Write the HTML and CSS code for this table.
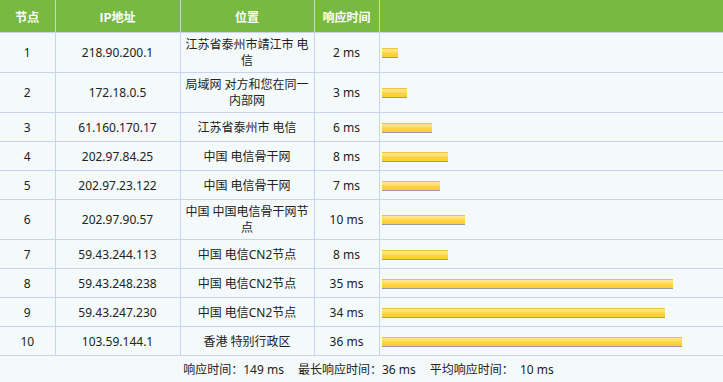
FILE: index.html
```html
<!DOCTYPE html>
<html lang="zh">
<head>
<meta charset="utf-8">
<link rel="stylesheet" href="styles.css">
</head>
<body>
<table class="trace">
  <colgroup>
    <col class="c-node"><col class="c-ip"><col class="c-loc"><col class="c-time"><col class="c-bar">
  </colgroup>
  <thead>
    <tr><th>节点</th><th>IP地址</th><th>位置</th><th>响应时间</th><th></th></tr>
  </thead>
  <tbody>
    <tr><td>1</td><td>218.90.200.1</td><td class="loc">江苏省泰州市靖江市 电信</td><td>2 ms</td><td class="bar-cell"><div class="bar" style="width:16px"></div></td></tr>
    <tr><td>2</td><td>172.18.0.5</td><td class="loc">局域网 对方和您在同一内部网</td><td>3 ms</td><td class="bar-cell"><div class="bar" style="width:25px"></div></td></tr>
    <tr><td>3</td><td>61.160.170.17</td><td class="loc">江苏省泰州市 电信</td><td>6 ms</td><td class="bar-cell"><div class="bar" style="width:50px"></div></td></tr>
    <tr><td>4</td><td>202.97.84.25</td><td class="loc">中国 电信骨干网</td><td>8 ms</td><td class="bar-cell"><div class="bar" style="width:66px"></div></td></tr>
    <tr><td>5</td><td>202.97.23.122</td><td class="loc">中国 电信骨干网</td><td>7 ms</td><td class="bar-cell"><div class="bar" style="width:58px"></div></td></tr>
    <tr><td>6</td><td>202.97.90.57</td><td class="loc">中国 中国电信骨干网节点</td><td>10 ms</td><td class="bar-cell"><div class="bar" style="width:83px"></div></td></tr>
    <tr><td>7</td><td>59.43.244.113</td><td class="loc">中国 电信CN2节点</td><td>8 ms</td><td class="bar-cell"><div class="bar" style="width:66px"></div></td></tr>
    <tr><td>8</td><td>59.43.248.238</td><td class="loc">中国 电信CN2节点</td><td>35 ms</td><td class="bar-cell"><div class="bar" style="width:291px"></div></td></tr>
    <tr><td>9</td><td>59.43.247.230</td><td class="loc">中国 电信CN2节点</td><td>34 ms</td><td class="bar-cell"><div class="bar" style="width:283px"></div></td></tr>
    <tr><td>10</td><td>103.59.144.1</td><td class="loc">香港 特别行政区</td><td>36 ms</td><td class="bar-cell"><div class="bar" style="width:300px"></div></td></tr>
  </tbody>
  <tfoot>
    <tr><td colspan="5"><span class="stat">响应时间：149 ms</span><span class="stat">最长响应时间：36 ms</span><span class="stat">平均响应时间：&nbsp; 10 ms</span></td></tr>
  </tfoot>
</table>
</body>
</html>
```
FILE: styles.css
```css
html, body {
  margin: 0;
  padding: 0;
  background: #f4fafa;
}
body {
  font-family: "Noto Sans", "Noto Sans CJK SC", sans-serif;
  font-size: 12px;
  color: #222;
}
.trace {
  width: 723px;
  border-collapse: collapse;
  table-layout: fixed;
}
.c-node { width: 55px; }
.c-ip { width: 125px; }
.c-loc { width: 134px; }
.c-time { width: 65px; }
.trace th {
  background: #77b941;
  color: #fff;
  font-weight: bold;
  font-family: "Noto Sans CJK SC", sans-serif;
  font-size: 12px;
  height: 32px;
  padding: 0;
  border-left: 1px solid #c5e0b0;
  border-bottom: 1px solid #c8d4ef;
}
.trace th:first-child { border-left: none; }
.trace td {
  text-align: center;
  vertical-align: middle;
  line-height: 16px;
  padding: 4px 5px 3px;
  height: 21px;
  border: 1px solid #c8d4ef;
  border-top: none;
}
.trace td.loc {
  padding-left: 1px;
  padding-right: 1px;
}
.trace tbody td:first-child { border-left: none; }
.trace tbody td:last-child { border-right: none; }
.trace td.bar-cell {
  text-align: left;
  padding: 4px 2px 3px;
}
.bar {
  height: 8px;
  border-top: 1px solid #f2c23a;
  border-bottom: 1px solid #9a9a9a;
  background: linear-gradient(#ffe98a 0%, #ffe070 30%, #ffd23d 60%, #ffcc33 100%);
}
.trace tfoot td {
  border: none;
  height: 20px;
  padding: 4px 0 3px 14px;
}
.stat { margin: 0 7px; }
```
